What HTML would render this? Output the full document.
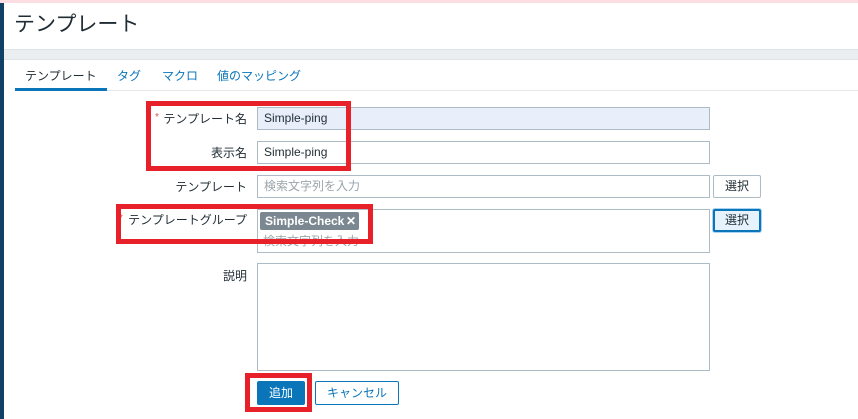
<!DOCTYPE html>
<html><head><meta charset="utf-8"><style>
*{box-sizing:border-box;margin:0;padding:0}
body{width:858px;height:419px;overflow:hidden;background:#fff;font-family:"Liberation Sans","Noto Sans CJK JP",sans-serif;font-size:13px;color:#1f2c33;position:relative}
.a{position:absolute}
.inp{position:absolute;left:257px;width:453px;height:23px;border:1px solid #acbbc4;background:#fff;padding:0 6px;line-height:21px;font-size:12px}
.lbl{position:absolute;right:611px;font-size:12px;line-height:16px;color:#1f2c33;white-space:nowrap}
.btn{position:absolute;left:713px;width:48px;height:23px;border:1px solid #acbbc4;border-radius:2px;background:#fff;text-align:center;line-height:21px;font-size:12px}
.red{position:absolute;border:5px solid #e8202a}
.ast{position:absolute;color:#e05050;font-size:10px}
</style></head><body>
<div class="a" style="left:0;top:0;width:858px;height:3px;background:#fbdde2"></div>
<div class="a" style="left:0;top:3px;width:4px;height:416px;background:#0e4165"></div>
<div class="a" style="left:14px;top:11px;font-size:21px;line-height:28px;color:#1f2c33">テンプレート</div>
<div class="a" style="left:4px;top:49px;width:854px;height:11px;background:#ebeef0;border-top:1px solid #dfe4e7;border-bottom:1px solid #dfe4e7"></div>
<div class="a" style="left:15px;top:90px;width:843px;height:1px;background:#e4e8eb"></div>
<div class="a" style="left:15px;top:88px;width:92px;height:3px;background:#0a75b9"></div>
<div class="a" style="left:25px;top:67px;font-size:12px;color:#1f2c33">テンプレート</div>
<div class="a" style="left:117px;top:67px;font-size:12px;color:#0a75b9">タグ</div>
<div class="a" style="left:162px;top:67px;font-size:12px;color:#0a75b9">マクロ</div>
<div class="a" style="left:217px;top:67px;font-size:12px;color:#0a75b9">値のマッピング</div>

<div class="ast" style="left:155px;top:112px">*</div>
<div class="lbl" style="top:111px">テンプレート名</div>
<div class="inp" style="top:107px;background:#e8effa">Simple-ping</div>
<div class="lbl" style="top:145px">表示名</div>
<div class="inp" style="top:141px">Simple-ping</div>
<div class="lbl" style="top:179px">テンプレート</div>
<div class="inp" style="top:175px;color:#9aa5ab">検索文字列を入力</div>
<div class="btn" style="top:175px">選択</div>
<div class="ast" style="left:119px;top:213px">*</div>
<div class="lbl" style="top:212px">テンプレートグループ</div>
<div class="inp" style="top:209px;height:44px"></div>
<div class="a" style="left:260px;top:212px;width:99px;height:18px;background:#7b8891;border-radius:2px;color:#fff;font-weight:bold;font-size:12px;line-height:18px;padding-left:5px;white-space:nowrap">Simple-Check<span style="position:absolute;left:86px">✕</span></div>
<div class="a" style="left:263px;top:232px;color:#9aa5ab;font-size:12px">検索文字列を入力</div>
<div class="btn" style="top:209px;background:#e6f2fc;border:2px solid #0a75b9;box-shadow:0 0 0 1px #a9d2f3;line-height:19px">選択</div>
<div class="lbl" style="top:268px">説明</div>
<div class="inp" style="top:263px;height:108px"></div>
<div class="a" style="left:257px;top:381px;width:48px;height:24px;background:#0a75b9;border-radius:2px;color:#fff;text-align:center;line-height:24px;font-size:12px">追加</div>
<div class="a" style="left:315px;top:381px;width:84px;height:24px;border:1px solid #0a75b9;border-radius:2px;color:#0a75b9;text-align:center;line-height:22px;font-size:12px">キャンセル</div>

<div class="red" style="left:146px;top:101px;width:205px;height:70px"></div>
<div class="red" style="left:116px;top:204px;width:257px;height:40px"></div>
<div class="red" style="left:245px;top:373px;width:67px;height:39px"></div>
</body></html>
